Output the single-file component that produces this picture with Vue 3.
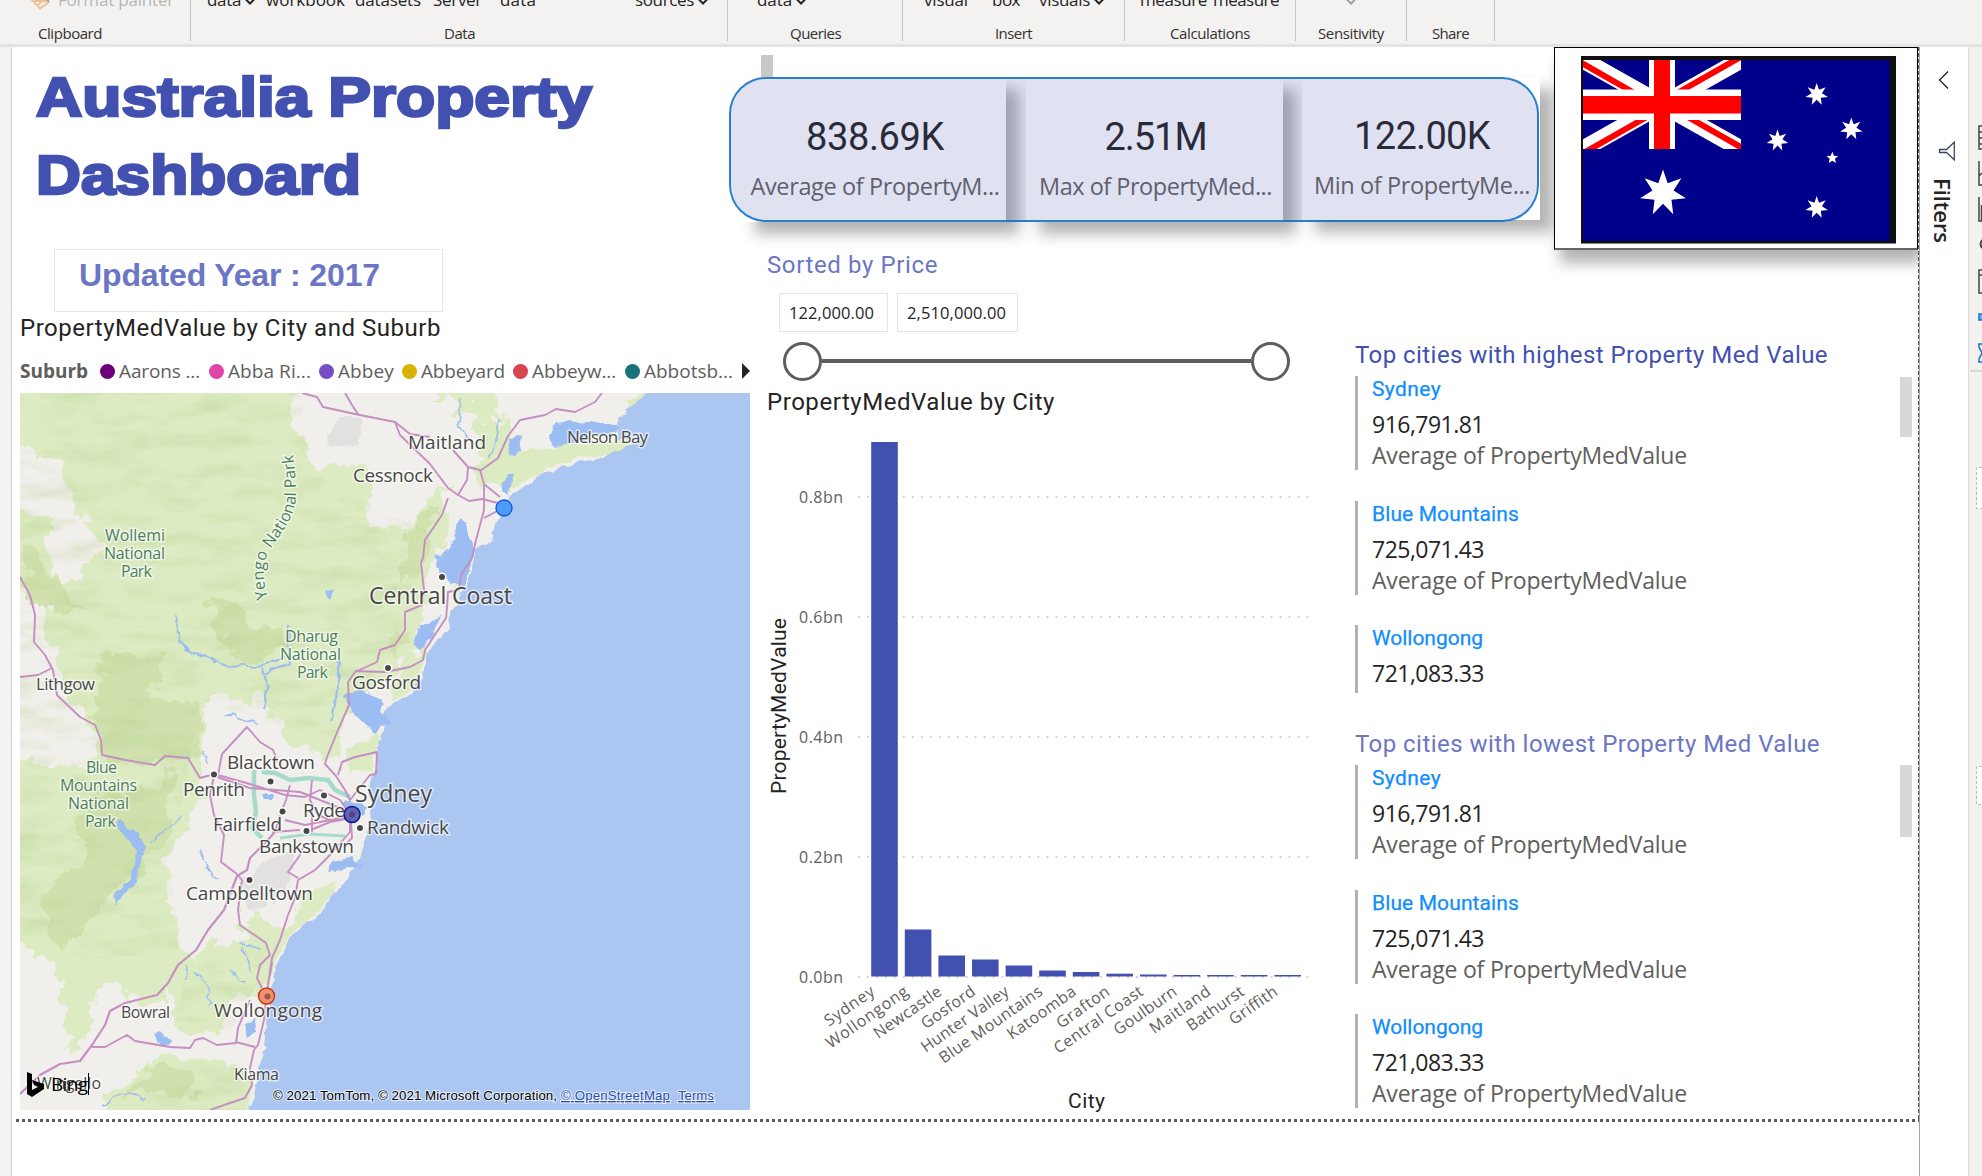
<script setup>
// Makes a run of text take exactly the given length in pixels, by its letter
// spacing or, with the .scale modifier, by widening the letters themselves.
const vFit = {
  mounted(el, { value, modifiers }) {
    const box = el.getBoundingClientRect()
    const size = Math.max(box.width, box.height)
    if (modifiers.scale) el.style.transform = `scaleX(${value / size})`
    else el.style.letterSpacing = `${(value - size) / el.textContent.length}px`
  },
}

const ribbon = [
  { w: 191, label: 'Clipboard', lx: 38, lw: 64, icon: true, cmds: [{ t: 'Format painter', gap: 8, w: 116, off: true }] },
  {
    w: 537, label: 'Data', lx: 253, lw: 31,
    cmds: [
      { t: 'data', gap: 16, w: 34, chev: true },
      { t: 'workbook', gap: 10, w: 79 },
      { t: 'datasets', gap: 10, w: 66 },
      { t: 'Server', gap: 12, w: 49 },
      { t: 'data', gap: 18, w: 36 },
      { t: 'sources', gap: 99, w: 59, chev: true },
    ],
  },
  { w: 175, label: 'Queries', lx: 62, lw: 51, cmds: [{ t: 'data', gap: 29, w: 35, chev: true }] },
  {
    w: 222, label: 'Insert', lx: 92, lw: 37,
    cmds: [{ t: 'visual', gap: 21, w: 44 }, { t: 'box', gap: 24, w: 28 }, { t: 'visuals', gap: 19, w: 51, chev: true }],
  },
  { w: 171, label: 'Calculations', lx: 45, lw: 80, cmds: [{ t: 'measure', gap: 15, w: 67 }, { t: 'measure', gap: 6, w: 66 }] },
  { w: 111, label: 'Sensitivity', lx: 22, lw: 66, cmds: [{ t: '', gap: 46, w: 0, chev: true, off: true }] },
  { w: 88, label: 'Share', lx: 25, lw: 37, cmds: [] },
]

const cards = [
  { value: '838.69K', vw: 138, label: 'Average of PropertyM...', lw: 249 },
  { value: '2.51M', vw: 102, label: 'Max of PropertyMed...', lw: 233 },
  { value: '122.00K', vw: 136, label: 'Min of PropertyMe...', lw: 216 },
]

const legend = [
  { t: 'Aarons ...', c: '#6b007b', w: 81, cell: 109 },
  { t: 'Abba Ri...', c: '#e044a7', w: 83, cell: 110 },
  { t: 'Abbey', c: '#744ec2', w: 56, cell: 83 },
  { t: 'Abbeyard', c: '#d9b300', w: 84, cell: 111 },
  { t: 'Abbeyw...', c: '#d64550', w: 84, cell: 112 },
  { t: 'Abbotsb...', c: '#197278', w: 89, cell: 110 },
]

const bars = [
  ['Sydney', 442, 57], ['Wollongong', 929.5, 96], ['Newcastle', 955.5, 79], ['Gosford', 959.5, 62],
  ['Hunter Valley', 965.5, 103], ['Blue Mountains', 970.5, 122], ['Katoomba', 972, 80], ['Grafton', 973.7, 61],
  ['Central Coast', 974.5, 105], ['Goulburn', 975, 73], ['Maitland', 975, 70], ['Bathurst', 975, 66], ['Griffith', 975, 55],
].map(([name, top, len], i) => ({ name, top, len, x: 871.2 + i * 33.6 }))

const ticks = ['0.8bn', '0.6bn', '0.4bn', '0.2bn', '0.0bn'].map((t, i) => ({ t, y: 497 + i * 120 }))

const averages = 'Average of PropertyMedValue'
const cities = [
  { name: 'Sydney', nw: 69, value: '916,791.81' },
  { name: 'Blue Mountains', nw: 147, value: '725,071.43' },
  { name: 'Wollongong', nw: 111, value: '721,083.33' },
]
const rankings = [
  { title: 'Top cities with highest Property Med Value', tw: 473, cls: 'high' },
  { title: 'Top cities with lowest Property Med Value', tw: 465, cls: 'low' },
]

const places = [
  ['Maitland', 408, 449, 78, 19], ['Cessnock', 353, 482, 80, 19], ['Nelson Bay', 567, 443, 81, 17],
  ['Central Coast', 369, 604, 143, 23], ['Gosford', 352, 689, 69, 19], ['Lithgow', 36, 690, 59, 17],
  ['Blacktown', 227, 769, 88, 19], ['Penrith', 183, 796, 62, 19], ['Sydney', 355, 802, 77, 23],
  ['Ryde', 303, 817, 42, 19], ['Fairfield', 213, 831, 69, 19], ['Randwick', 367, 834, 82, 19],
  ['Bankstown', 259, 853, 95, 19], ['Campbelltown', 186, 900, 127, 19], ['Bowral', 121, 1018, 49, 16],
  ['Wollongong', 214, 1017, 108, 19], ['Kiama', 234, 1080, 45, 16], ['Wingello', 37, 1089, 64, 16],
]
const parks = [
  ['Wollemi', 105, 541, 60], ['National', 104, 559, 61], ['Park', 121, 577, 31],
  ['Dharug', 285, 642, 53], ['National', 280, 660, 61], ['Park', 297, 678, 31],
  ['Blue', 86, 773, 31], ['Mountains', 60, 791, 77], ['National', 68, 809, 61], ['Park', 85, 827, 31],
]
const dots = [[442, 577], [388, 668], [214, 774.5], [270.5, 781.5], [324, 795.5], [282.5, 811.5], [360, 828], [306.5, 831], [249.5, 880]]

function star(cx, cy, r, n, inner) {
  const pts = []
  for (let i = 0; i < n * 2; i++) {
    const a = -Math.PI / 2 + (i * Math.PI) / n
    const d = i % 2 ? r * inner : r
    pts.push(`${(cx + d * Math.cos(a)).toFixed(2)},${(cy + d * Math.sin(a)).toFixed(2)}`)
  }
  return pts.join(' ')
}
const stars = [
  star(1663, 193, 23.5, 7, 0.46), star(1816.7, 94.5, 11.5, 7, 0.46), star(1777.5, 140.5, 11, 7, 0.46),
  star(1851.3, 129, 11.5, 7, 0.46), star(1832.3, 158, 6.2, 5, 0.45), star(1816.7, 207.5, 11.5, 7, 0.46),
]
</script>

<template>
  <div class="app">
    <header class="ribbon">
      <div v-for="g in ribbon" :key="g.label" class="group" :style="{ width: g.w + 'px' }">
        <div class="cmds">
          <svg v-if="g.icon" class="brush" width="20" height="26" viewBox="0 0 20 26">
            <path d="M1 12 L10 21.5 L19 15 M4 14 L18 14 M8 18 L13 13" fill="none" stroke="#eebf90" stroke-width="1.8" />
            <path d="M16 11 L19 15" stroke="#a19f9d" stroke-width="2" />
          </svg>
          <template v-for="(c, i) in g.cmds" :key="i">
            <span class="cmd" :class="{ off: c.off }" :style="{ marginLeft: c.gap + 'px', width: c.w + 'px' }"><span v-if="c.t" v-fit="c.w">{{ c.t }}</span></span>
            <svg v-if="c.chev" class="chev" :class="{ off: c.off }" width="12" height="26" viewBox="0 0 12 26">
              <path d="M1.5 12 L6 16.5 L10.5 12" fill="none" stroke="currentColor" stroke-width="2" />
            </svg>
          </template>
        </div>
        <div class="glabel" :style="{ marginLeft: g.lx + 'px' }"><span v-fit="g.lw">{{ g.label }}</span></div>
      </div>
    </header>

    <div class="body">
      <div class="rail"></div>

      <main class="page">
        <div class="top">
          <h1 class="title"><span v-fit.scale="556">Australia Property</span><br /><span v-fit.scale="325">Dashboard</span></h1>
          <div class="kpis">
            <div v-for="c in cards" :key="c.value" class="kpi">
              <div class="kval"><span v-fit="c.vw">{{ c.value }}</span></div>
              <div class="klab"><span v-fit="c.lw">{{ c.label }}</span></div>
            </div>
            <div class="pill"></div>
            <div class="grip"></div>
          </div>
          <div class="flagcard">
            <svg width="364" height="202" viewBox="1554 47 364 202">
              <rect x="1581" y="56" width="315" height="187.5" fill="#101010" />
              <rect x="1583" y="60" width="306.5" height="181" fill="#00008b" />
              <svg x="1583" y="60" width="158" height="89" viewBox="0 0 158 89">
                <path d="M0 0 L158 89 M158 0 L0 89" stroke="#fff" stroke-width="17" />
                <path d="M-3 2 L76 47 M161 -5 L82 40 M-3 95 L76 50 M82 44 L161 89" stroke="#f00" stroke-width="6" />
                <rect x="66" width="26" height="89" fill="#fff" /><rect y="29.5" width="158" height="30.5" fill="#fff" />
                <rect x="71" width="16" height="89" fill="#f00" /><rect y="36" width="158" height="17.5" fill="#f00" />
              </svg>
              <polygon v-for="s in stars" :key="s" :points="s" fill="#fff" />
            </svg>
          </div>
        </div>

        <div class="columns">
          <section class="left">
            <div class="updated"><span v-fit="301">Updated Year : 2017</span></div>
            <h2 class="vtitle"><span v-fit="421">PropertyMedValue by City and Suburb</span></h2>
            <div class="legend">
              <div class="lname"><b v-fit="68">Suburb</b></div>
              <div v-for="l in legend" :key="l.t" class="litem" :style="{ width: l.cell + 'px' }">
                <i :style="{ background: l.c }"></i><span v-fit="l.w">{{ l.t }}</span>
              </div>
              <div class="more"></div>
            </div>

            <svg class="map" width="730" height="717" viewBox="20 393 730 717">
              <defs>
                <filter id="rough" x="-5%" y="-5%" width="110%" height="110%">
                  <feTurbulence type="fractalNoise" baseFrequency="0.045" numOctaves="4" seed="7" />
                  <feDisplacementMap in="SourceGraphic" scale="34" xChannelSelector="R" yChannelSelector="G" />
                </filter>
                <filter id="coast" x="-5%" y="-5%" width="110%" height="110%">
                  <feTurbulence type="fractalNoise" baseFrequency="0.08" numOctaves="3" seed="3" />
                  <feDisplacementMap in="SourceGraphic" scale="9" xChannelSelector="R" yChannelSelector="G" />
                </filter>
                <filter id="relief" x="0" y="0" width="100%" height="100%">
                  <feTurbulence type="fractalNoise" baseFrequency="0.02 0.06" numOctaves="4" seed="11" />
                  <feColorMatrix values="0 0 0 0 .45  0 0 0 0 .6  0 0 0 0 .25  0 2.2 0 0 -.98" />
                  <feComposite in2="SourceGraphic" operator="in" />
                </filter>
                <path id="yengo" d="M268 598 C261 575 263 558 273 545 C288 525 297 510 296 490 C296 475 294 465 292 444" />
                <clipPath id="landclip">
                  <path d="M20 393 H647 L632 407 L620 417 L616 430 L620 438 L640 440 L617 452 L600 457 L560 464 L530 480 L507 497 L504 512 L495 525 L489 540 L474 550 L471 570 L464 590 L450 612 L447 622 L430 645 L424 662 L418 680 L412 690 L388 705 L375 722 L385 727 L377 745 L377 760 L368 790 L366 835 L352 865 L341 880 L320 910 L290 935 L275 962 L268 990 L265 1010 L262 1050 L256 1070 L247 1110 H20 Z" />
                </clipPath>
              </defs>
              <rect x="20" y="393" width="730" height="717" fill="#abc6f1" />
              <g filter="url(#coast)">
                <path fill="#f1efeb" d="M10 380 H655 L632 407 L620 417 L616 430 L617 440 L642 440 L618 450 L600 457 L585 461 L560 466 L530 482 L507 499 L504 512 L495 525 L491 540 L474 550 L471 570 L466 590 L451 612 L449 622 L450 628 L432 645 L426 662 L420 680 L412 692 L388 707 L376 720 L386 729 L378 745 L378 760 L372 778 L370 790 L372 805 L368 835 L356 867 L343 882 L322 910 L292 935 L277 962 L270 990 L267 1010 L264 1050 L258 1070 L249 1120 H10 Z" />
              </g>

              <g clip-path="url(#landclip)">
                <g filter="url(#rough)" fill="#dcebc2">
                  <path d="M0 370 H305 L292 410 L300 435 L318 470 L350 458 L372 490 L364 520 L400 530 L430 500 L448 480 L440 540 L425 600 L420 630 L405 660 L380 680 L345 720 L335 760 L300 745 L272 722 L262 698 L205 702 L205 745 L200 800 L170 850 L165 900 L190 950 L172 985 L160 1010 L110 985 L90 1000 L70 1050 L55 960 L0 940 V760 L90 765 L95 730 L60 690 L40 600 L0 560 V500 L45 520 L60 590 L85 575 L98 540 L75 500 L60 460 L0 440 Z" />
                  <path d="M185 960 L235 935 L285 930 L345 872 L350 890 L290 950 L278 980 L240 990 L220 1035 L172 1028 L170 985 Z" />
                  <path d="M95 1120 L120 1080 L175 1050 L235 1065 L258 1085 L250 1120 Z" />
                  <path d="M245 905 L270 925 L265 945 L248 930 Z M470 430 L510 420 L520 450 L550 462 L500 490 L480 470 Z M470 400 L500 396 L490 430 Z M430 395 L495 393 L480 415 Z" />
                  <path d="M410 650 L430 640 L420 680 L395 705 L390 690 Z M345 745 L378 735 L375 770 L350 770 Z M60 1010 L90 1000 L95 1030 L70 1040 Z" />
                  <path d="M268 690 L340 680 L335 750 L300 752 L278 735 Z M425 520 L445 505 L450 540 L425 560 Z" />
                </g>
                <g filter="url(#coast)" fill="#dcebc2">
                  <path d="M535 452 L560 446 L590 442 L640 440 L620 452 L580 458 L545 468 L520 482 L508 492 L515 476 Z M455 582 L470 565 L464 590 L452 608 Z M625 400 L647 393 L632 407 Z" />
                  <path d="M402 672 L420 668 L412 690 L390 702 Z M345 748 L372 742 L372 768 L350 772 Z M300 897 L338 880 L320 908 L296 925 Z" />
                </g>
                <g filter="url(#rough)" fill="#d0e1ad">
                  <path d="M205 605 L225 598 L245 618 L285 635 L285 655 L240 660 L218 640 Z" />
                  <path d="M105 655 L165 650 L150 700 L200 710 L200 760 L165 765 L100 765 L95 700 Z" />
                  <path d="M110 790 L180 775 L165 840 L130 880 L60 950 L40 900 L90 850 L70 820 Z" />
                  <path d="M20 540 L45 570 L85 610 L50 620 L28 590 Z M410 520 L440 505 L425 560 L400 590 Z M385 640 L410 630 L395 665 Z" />
                  <path d="M125 1090 L150 1065 L200 1080 L190 1100 Z" />
                </g>
                <path filter="url(#relief)" opacity=".34" d="M20 393 H300 L310 470 L360 500 L425 530 L400 640 L330 740 L200 700 L170 870 L180 950 L90 960 L20 940 Z M190 960 L270 930 L260 980 L230 1030 L175 1020 Z M100 1110 L170 1055 L245 1070 L245 1110 Z" />
                <path fill="#e3e1df" d="M338 415 L362 417 L358 447 L326 445 Z M262 862 L295 850 L290 880 L275 905 L250 880 Z M240 880 L262 870 L266 905 L250 910 Z" filter="url(#coast)" />
              </g>

              <g filter="url(#coast)" fill="#9bbdf2">
                <path d="M555 424 L590 420 L618 426 L614 434 L590 436 L560 448 L548 440 Z M508 440 L522 436 L520 450 L510 454 Z M506 474 L514 474 L508 496 L502 490 Z" />
                <path d="M460 518 L468 530 L474 545 L470 565 L464 588 L448 580 L440 560 L450 548 L455 540 Z M435 556 L450 562 L455 578 L440 575 Z" />
                <path d="M418 628 L440 616 L432 638 L420 650 L414 640 Z M345 696 L360 690 L385 700 L378 712 L390 722 L376 732 L362 720 L350 712 Z M325 592 L334 586 L330 600 Z" />
                <path d="M342 800 L366 806 L364 816 L345 812 Z M334 862 L352 856 L362 866 L344 870 L330 872 Z M244 1025 L257 1018 L258 1032 L246 1038 Z M154 1034 L160 1032 L172 1044 L160 1044 Z M262 794 h10 v5 h-10 Z" />
                <path d="M118 820 L138 834 L146 845 L139 870 L135 885 L118 900 L112 908 L118 890 L132 876 L136 850 L118 828 Z" />
              </g>
              <g filter="url(#coast)" fill="none" stroke="#9dbcf0" stroke-width="2.2">
                <path d="M175 614 L180 640 L187 650 L205 657 L225 665 L258 668 L285 656 M262 668 L268 690 L264 710 M338 660 L338 690 L330 720 M265 672 L290 665 L288 625" />
                <path d="M225 718 L235 715 L258 724 M200 850 L207 870 L218 880 M240 945 L262 948 M243 948 L252 970 M196 972 L208 985 L210 1005 M186 965 L188 980 M230 970 L245 984 M100 1105 L122 1092 L145 1098 M205 750 L207 765 M148 842 L183 818 M460 397 L458 425 L468 438 M497 420 L497 440 L490 458" stroke-width="1.5" />
              </g>

              <g fill="none" stroke="#8ed3c0" stroke-width="4.5" opacity=".75">
                <path d="M254 770 V795 L256 812 L252 828 L262 838 M262 772 L275 773 L290 780 L308 778 L328 780 L335 790 L350 797" />
                <path d="M280 838 L310 834 L345 836" stroke-width="3" />
              </g>

              <g fill="none" stroke="#c58fc2" stroke-width="1.9" stroke-linejoin="round">
                <path d="M302 393 L317 397 L323 407 L355 414 L380 419 L395 422 L400 435 L430 464 L448 488 L458 495 L469 501 L482 499 L502 504" />
                <path d="M345 393 L352 405 L358 414 M395 422 L410 434 L430 437 M453 450 L468 467 L480 470 L484 484 L500 497" />
                <path d="M602 393 L595 402 L575 412 L556 409 L545 415 L520 420 L508 436 L498 458 L480 471 M468 468 L467 480 L458 495" />
                <path d="M448 498 L442 515 L425 540 L423 558 L421 563 L424 590 L422 605 L405 612 L405 630 L395 645 L380 650 L377 662 L355 672 L348 682 L349 705 L338 730 L327 757" />
                <path d="M484 485 L484 510 L480 525 L476 540 L472 558 L461 575 L459 590 L448 592 L447 608 L446 618 L425 650 L423 660 L410 667 L385 672 L355 671 M484 518 L505 507" />
                <path d="M20 577 L30 595 L35 615 L34 642 L45 655 L53 670 L57 695 L80 717 L95 725 L101 740 L102 755 L125 760 L155 765 L165 756 L188 758 L200 778 L214 774" />
                <path d="M20 677 L38 675 L52 668" />
                <path d="M214 774 L250 784 L285 795 L305 797 L320 790 L340 800 L350 814 M214 776 L250 788 L300 792 L350 812 M222 754 L247 727 L260 742 L273 750 L278 762 M222 754 L218 775 M214 776 L210 795 L214 815 L224 835 L221 862 L237 874" />
                <path d="M327 757 L325 764 L336 776 L345 790 L350 800 L358 790 L370 775 L376 774 L377 752 L355 757 L342 762 L338 775 M290 785 L286 800 L280 815 L275 832 M285 820 L305 825 L350 816 M272 832 L300 830 M312 780 L310 800 L318 815 L330 820 M306 832 L330 822 L351 818 M351 822 L352 838 L345 845 M312 806 L312 832" />
                <path d="M350 816 L350 832 L330 855 L315 870 L298 880 L295 898 L288 915 L280 940 L272 958 L268 985 L266 1000 L264 1020 L258 1045 L254 1050 L250 1068 L252 1085 L245 1098 L230 1103 L210 1110" />
                <path d="M275 832 L265 843 L250 858 L247 870 L237 876 L224 910 L208 930 L196 950 L178 965 L168 983 L157 995 L125 1003 L110 1011 L105 1025 L92 1045 L80 1061 L60 1064 L40 1075 L20 1094" stroke-width="2.2" />
                <path d="M237 874 L242 880 L238 910 L240 925 L266 943 L270 955 L260 965 L257 978 L262 988 M298 878 L288 872 L300 855 L304 845 M272 962 L270 975" />
                <path d="M92 1047 L105 1047 L127 1035 L135 1041 L170 1047 L190 1048 L195 1040 L203 1038 L217 1045 L236 1043 L238 1028 L250 1000 M236 1042 L255 1047" />
              </g>

              <g class="halo" font-size="16">
                <text v-for="(p, i) in parks" :key="i" class="park" :x="p[1]" :y="p[2]" :textLength="p[3]">{{ p[0] }}</text>
                <text class="park"><textPath href="#yengo" textLength="152">Yengo National Park</textPath></text>
                <text v-for="p in places" :key="p[0]" class="place" :x="p[1]" :y="p[2]" :textLength="p[3]" :font-size="p[4]">{{ p[0] }}</text>
              </g>
              <circle v-for="d in dots" :key="d[0]" :cx="d[0]" :cy="d[1]" r="3.8" fill="#484848" stroke="#fff" stroke-width="1.6" />
              <circle cx="504" cy="508" r="8" fill="#4c9bf8" stroke="#1258cf" stroke-width="1.3" />
              <circle cx="352" cy="814.5" r="8" fill="#5a64b8" stroke="#12127c" stroke-width="1.5" /><circle cx="352" cy="814.5" r="3" fill="#5d3f78" />
              <circle cx="266.5" cy="996" r="8" fill="#ec9373" stroke="#c9360e" stroke-width="1.5" /><circle cx="267.5" cy="996.5" r="3" fill="#a8563c" />
              <path d="M27 1072 L32 1074 V1090 L38 1087 L34 1085 L32 1080 L44 1084 V1089 L32 1097 L27 1094 Z" />
              <text class="bing" x="51" y="1091" textLength="37">Bing</text>
              <path d="M88.5 1073 V1095" stroke="#000" />
              <g class="copy" font-size="13.3">
                <text x="273" y="1100" textLength="284">© 2021 TomTom, © 2021 Microsoft Corporation,</text>
                <text x="561" y="1100" textLength="109" class="lnk">© OpenStreetMap</text>
                <text x="678" y="1100" textLength="36" class="lnk">Terms</text>
              </g>
            </svg>
          </section>

          <section class="middle">
            <h2 class="sorted"><span v-fit="171">Sorted by Price</span></h2>
            <div class="inputs">
              <div class="inp first"><span v-fit="85">122,000.00</span></div>
              <div class="inp second"><span v-fit="99">2,510,000.00</span></div>
            </div>
            <div class="slider"><i class="knob"></i><i class="track"></i><i class="knob"></i></div>
            <h2 class="vtitle chart-title"><span v-fit="288">PropertyMedValue by City</span></h2>
            <svg class="chart" width="560" height="694" viewBox="767 422 560 694">
              <g v-for="t in ticks" :key="t.t">
                <line x1="858" x2="1315" :y1="t.y" :y2="t.y" stroke="#d3d3d3" stroke-width="2" stroke-dasharray="2 6.97" />
                <text x="799" :y="t.y + 5.5" textLength="44" class="tick">{{ t.t }}</text>
              </g>
              <g v-for="b in bars" :key="b.name">
                <rect :x="b.x" :y="b.top" width="26.6" :height="976.5 - b.top" fill="#4250b0" />
                <text class="tick" text-anchor="end" :textLength="b.len" :transform="`translate(${b.x + 4.5} 994) rotate(-35)`">{{ b.name }}</text>
              </g>
              <text class="axis" x="1068" y="1108" textLength="37">City</text>
              <text class="axis" textLength="176" transform="translate(786 794) rotate(-90)">PropertyMedValue</text>
            </svg>
          </section>

          <section class="right">
            <div v-for="r in rankings" :key="r.cls" class="rank" :class="r.cls">
              <h2><span v-fit="r.tw">{{ r.title }}</span></h2>
              <div class="scroller">
                <div class="list">
                  <div v-for="c in cities" :key="c.name" class="city">
                    <div class="cname"><span v-fit="c.nw">{{ c.name }}</span></div>
                    <div class="cval"><span v-fit="112">{{ c.value }}</span></div>
                    <div class="cavg"><span v-fit="315">{{ averages }}</span></div>
                  </div>
                </div>
                <div class="thumb"></div>
              </div>
            </div>
          </section>
        </div>
        <div class="pageend"></div>
      </main>

      <aside class="filters">
        <svg width="12" height="20" viewBox="0 0 12 20"><path d="M10 1.5 L1.5 10 L10 18.5" fill="none" stroke="#252423" stroke-width="1.4" /></svg>
        <svg class="funnel" width="18" height="20" viewBox="0 0 18 20"><path d="M16.3 1.2 V18.8 L8.5 11.5 H1.5 V8.5 H8.5 Z" fill="none" stroke="#3b4a5a" stroke-width="1.3" /></svg>
        <div class="ftext"><span v-fit="65">Filters</span></div>
      </aside>

      <aside class="viz">
        <svg width="13" height="780" viewBox="1969 47 13 780" fill="none" stroke="#444" stroke-width="1.5">
          <path d="M1982 126 H1979 V149 H1982 M1979 132 H1982 M1979 138 H1982 M1979 144 H1982" />
          <path d="M1979 161 V185 H1982 M1979 176 L1982 173" />
          <path d="M1979 197 V221 H1982 M1981.5 205 V221" />
          <path d="M1982.5 240 A5 5 0 0 0 1982.5 248" stroke-width="2" />
          <path d="M1982 270 H1979 V293 H1982 M1979 275 H1982" />
          <rect x="1979" y="314" width="6" height="6" fill="#6db3ea" stroke="#1373c5" />
          <path d="M1982 344 H1979 V347 L1982 353 L1979 359 V362 H1982" stroke="#1373c5" />
          <path d="M1970 371 H1982" stroke="#d2d0ce" />
          <path d="M1982 467.5 H1976.5 V508.5 H1982 M1982 766.5 H1976.5 V804.5 H1982" fill="#fff" stroke="#bdbbb9" stroke-width="1" stroke-dasharray="3 2" />
        </svg>
      </aside>
    </div>
  </div>
</template>

<style>
body { margin: 0; background: #fff; }
</style>

<style scoped>
.app {
  width: 1982px;
  height: 1176px;
  overflow: hidden;
  display: flex;
  flex-direction: column;
  background: #fff;
  font-family: "Open Sans", "Noto Sans", sans-serif;
  color: #252423;
}
.app span, .app b { white-space: nowrap; }
h1, h2 { margin: 0; font-weight: 400; }

.ribbon {
  flex: none;
  display: flex;
  height: 44px;
  background: #f3f2f1;
  border-bottom: 3px solid #e3e3e3;
  overflow: hidden;
}
.group { box-sizing: border-box; flex: none; border-right: 1px solid #c8c6c4; height: 41px; }
.cmds { display: flex; height: 26px; margin-top: -13px; font-size: 17px; line-height: 26px; }
.cmd { flex: none; }
.off { color: #b8b6b4; }
.brush { flex: none; margin-left: 30px; }
.chev { flex: none; margin-left: 3px; color: #252423; }
.chev.off { color: #a19f9d; }
.glabel { margin-top: 8px; font-size: 15px; line-height: 24px; color: #323130; }
.glabel span, .cmd span { display: inline-block; }

.body { flex: 1; display: flex; min-height: 0; }
.rail { flex: none; width: 11px; background: #f3f2f1; border-right: 1px solid #d2d0ce; }
.page { flex: none; width: 1907px; display: flex; flex-direction: column; }

.top { flex: none; display: flex; height: 188px; }
.title {
  flex: none;
  width: 707px;
  padding: 11px 0 0 24px;
  box-sizing: border-box;
  font: 700 55px/78px "Liberation Sans", Arial, sans-serif;
  color: #4250b0;
  -webkit-text-stroke: 2.6px #4250b0;
}
.title span { display: inline-block; transform-origin: 0 50%; }
.kpis { position: relative; flex: none; display: flex; margin: 30px 0 0 23px; height: 145px; gap: 20px; }
.kpi {
  width: 264px;
  height: 145px;
  background: #fff;
  box-shadow: 13px 12px 14px rgba(0, 0, 0, 0.3);
  text-align: center;
}
.kpi:nth-child(2) { width: 257px; }
.kpi:nth-child(3) { width: 238px; height: 143px; margin-left: -1px; }
.kval { padding: 35px 0 0 2px; font: 400 38px/50px Roboto, sans-serif; }
.klab { padding: 8px 0 0 2px; font-size: 23.5px; line-height: 32px; color: #666462; }
.kpi:nth-child(3) .kval { padding-top: 34px; }
.kpi span { display: inline-block; }
.pill {
  position: absolute;
  left: -13px;
  top: 0;
  width: 806px;
  height: 141px;
  border: 2px solid rgba(17, 113, 197, 0.9);
  border-radius: 37px;
  background: rgba(66, 80, 176, 0.165);
  background-clip: padding-box;
}
.grip { position: absolute; left: 19px; top: -22px; width: 12px; height: 22px; background: #c8c8c8; }
.flagcard {
  flex: none;
  width: 362px;
  height: 200px;
  margin-left: 14px;
  border: 1px solid #000;
  border-bottom: 2px solid #666;
  background: #fff;
  box-shadow: 6px 13px 14px rgba(0, 0, 0, 0.3);
  clip-path: inset(0 0 -40px -20px);
}
.flagcard svg { display: block; margin: -1px; }
.flagcard svg svg { margin: 0; }

.columns { flex: none; display: flex; height: 883px; }
.left { flex: none; width: 738px; padding-left: 8px; box-sizing: border-box; }
.updated {
  width: 363px;
  height: 61px;
  margin: 14px 0 0 34px;
  padding-left: 24px;
  border: 1px solid #e6e6e6;
  font: 700 32px/50px "Liberation Sans", Arial, sans-serif;
  color: #6b76c4;
}
.updated span { display: inline-block; }
.vtitle { font: 400 24px/32px Roboto, sans-serif; color: #252423; }
.vtitle span { display: inline-block; }
.left .vtitle { height: 32px; }
.legend { display: flex; align-items: center; box-sizing: border-box; height: 49px; padding-top: 5px; font-size: 19px; color: #605e5c; }
.lname { width: 80px; }
.lname b, .litem span { display: inline-block; }
.litem { flex: none; display: flex; align-items: center; }
.litem i { flex: none; width: 15px; height: 15px; border-radius: 50%; margin-right: 4px; }
.more { border-left: 8px solid #252423; border-top: 8px solid transparent; border-bottom: 8px solid transparent; margin-left: 7px; flex: none; }
.map { display: block; }
.halo text { paint-order: stroke; stroke: rgba(255, 255, 255, 0.65); stroke-width: 3px; stroke-linejoin: round; }
.park { fill: #4c7f5b; font-weight: 500; }
.place { fill: #484848; font-weight: 500; }
.bing { font-size: 19px; fill: #000; }
.copy { font-family: "Liberation Sans", Arial, sans-serif; }
.copy text { paint-order: stroke; stroke: rgba(255, 255, 255, 0.7); stroke-width: 2px; }
.copy .lnk { fill: #2a4db0; text-decoration: underline; }

.middle { flex: none; width: 598px; padding-left: 17px; box-sizing: border-box; }
.sorted { padding-top: 14px; font: 400 24px/32px Roboto, sans-serif; color: #6b76c4; }
.sorted span { display: inline-block; }
.inputs { display: flex; gap: 9px; margin: 12px 0 0 12px; }
.inp { height: 37px; border: 1px solid #e6e4e2; font-size: 16.5px; line-height: 37px; padding-left: 9px; box-sizing: content-box; }
.inp span { display: inline-block; }
.first { width: 98px; }
.second { width: 110px; }
.slider { display: flex; align-items: center; width: 507px; height: 38px; margin: 10px 0 0 16px; }
.knob { flex: none; width: 33px; height: 33px; border: 3px solid #605e5c; border-radius: 50%; background: #fff; }
.track { flex: 1; height: 4px; background: #605e5c; }
.chart-title { margin-top: 6px; height: 36px; }
.chart { display: block; }
.tick { font-size: 16px; fill: #605e5c; }
.axis { font: 400 21px Roboto, sans-serif; fill: #252423; }

.right { flex: none; width: 571px; padding: 104px 0 0 7px; box-sizing: border-box; }
.rank { height: 389px; }
.rank h2 { height: 37px; font: 400 24px/32px Roboto, sans-serif; color: #4250b0; }
.rank.low h2 { color: #6b76c4; }
.rank span { display: inline-block; }
.scroller { display: flex; justify-content: space-between; }
.list { height: 317px; overflow: hidden; }
.low .list { height: 344px; }
.city { width: 400px; height: 94px; padding-left: 14px; border-left: 3px solid #b3b0ad; margin-bottom: 30.5px; overflow: hidden; }
.cname { font: 400 21px/26px Roboto, sans-serif; color: #118dff; -webkit-text-stroke: 0.25px #118dff; height: 32px; }
.cval { font-size: 23px; line-height: 32px; height: 31px; }
.cavg { font-size: 23px; line-height: 33px; color: #605e5c; }
.thumb { width: 12px; height: 60px; margin: 1px 7px 0 0; background: #d9d8d7; }
.low .thumb { height: 72px; margin-top: 0; }

.pageend { flex: none; height: 3px; margin: 1px 0 0 4px; background: repeating-linear-gradient(90deg, #5c5c5c 0 3px, transparent 3px 6px); }

.filters {
  flex: none;
  width: 48px;
  border-left: 1px solid #a5a5a5;
  box-sizing: content-box;
  display: flex;
  flex-direction: column;
  align-items: center;
  position: relative;
}
.filters::before {
  content: "";
  position: absolute;
  left: -2px;
  top: 0;
  width: 1px;
  height: 1074px;
  background: repeating-linear-gradient(180deg, #555 0 4px, transparent 4px 6px);
}
.filters svg { flex: none; margin-top: 23px; }
.filters .funnel { margin: 51px 0 0 5px; }
.ftext { writing-mode: vertical-rl; margin: 17px 2px 0 0; font-size: 22px; font-weight: 600; line-height: 30px; }
.ftext span { display: inline-block; }
.viz { flex: none; width: 13px; background: #f3f2f1; border-left: 1px solid #dddbd9; }
.viz svg { display: block; }
</style>
